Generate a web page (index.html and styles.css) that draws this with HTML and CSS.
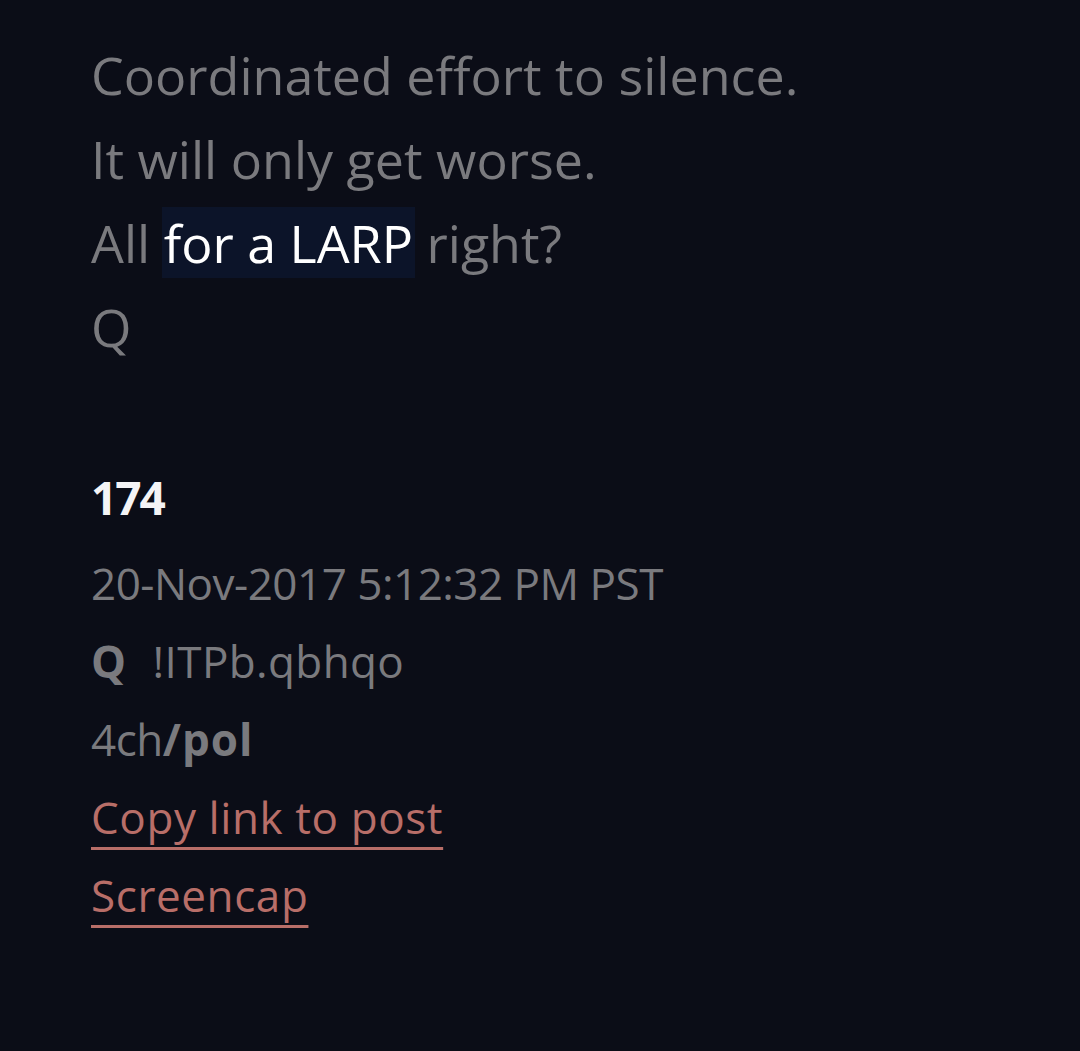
FILE: index.html
```html
<!DOCTYPE html>
<html lang="en">
<head>
<meta charset="utf-8">
<title>Post 174</title>
<link rel="stylesheet" href="styles.css">
</head>
<body>
<main class="page">
  <section class="post-text">
    <p class="line">Coordinated effort to silence.</p>
    <p class="line">It will only get worse.</p>
    <p class="line">All <span class="hl">for a LARP</span> right?</p>
    <p class="line">Q</p>
  </section>
  <section class="meta">
    <div class="num">174</div>
    <div class="row">20-Nov-2017 5:12:32 PM PST</div>
    <div class="row"><b class="q">Q</b><span class="trip">!ITPb.qbhqo</span></div>
    <div class="row">4ch<b class="board">/pol</b></div>
    <div class="row"><a class="link" href="#">Copy link to post</a></div>
    <div class="row"><a class="link" href="#">Screencap</a></div>
  </section>
</main>
</body>
</html>
```
FILE: styles.css
```css
html, body {
  margin: 0;
  padding: 0;
  background: #0b0d17;
}
body {
  width: 1080px;
  height: 1051px;
  overflow: hidden;
  font-family: "Open Sans", "Noto Sans", sans-serif;
  color: #7a7a7e;
}
.page {
  padding: 33px 0 0 91px;
}
.post-text {
  font-size: 52px;
}
.line {
  margin: 0;
  line-height: 84px;
}
.hl {
  background: #0c1429;
  color: #ffffff;
  padding: 0 2px;
  margin: 0 -2px;
}
.meta {
  margin-top: 89px;
  font-size: 44px;
  letter-spacing: -0.5px;
}
.num {
  color: #f4f4f6;
  font-size: 46px;
  font-weight: 700;
  letter-spacing: -2px;
  line-height: 78px;
  margin-bottom: 8px;
}
.row {
  line-height: 78px;
}
.q, .board {
  font-weight: 700;
}
.trip {
  margin-left: 27px;
  letter-spacing: 0.4px;
}
.board {
  letter-spacing: 1px;
}
.link {
  color: #b86e68;
  letter-spacing: 0.6px;
  text-decoration: underline;
  text-decoration-thickness: 3px;
  text-underline-offset: 13px;
}
```
